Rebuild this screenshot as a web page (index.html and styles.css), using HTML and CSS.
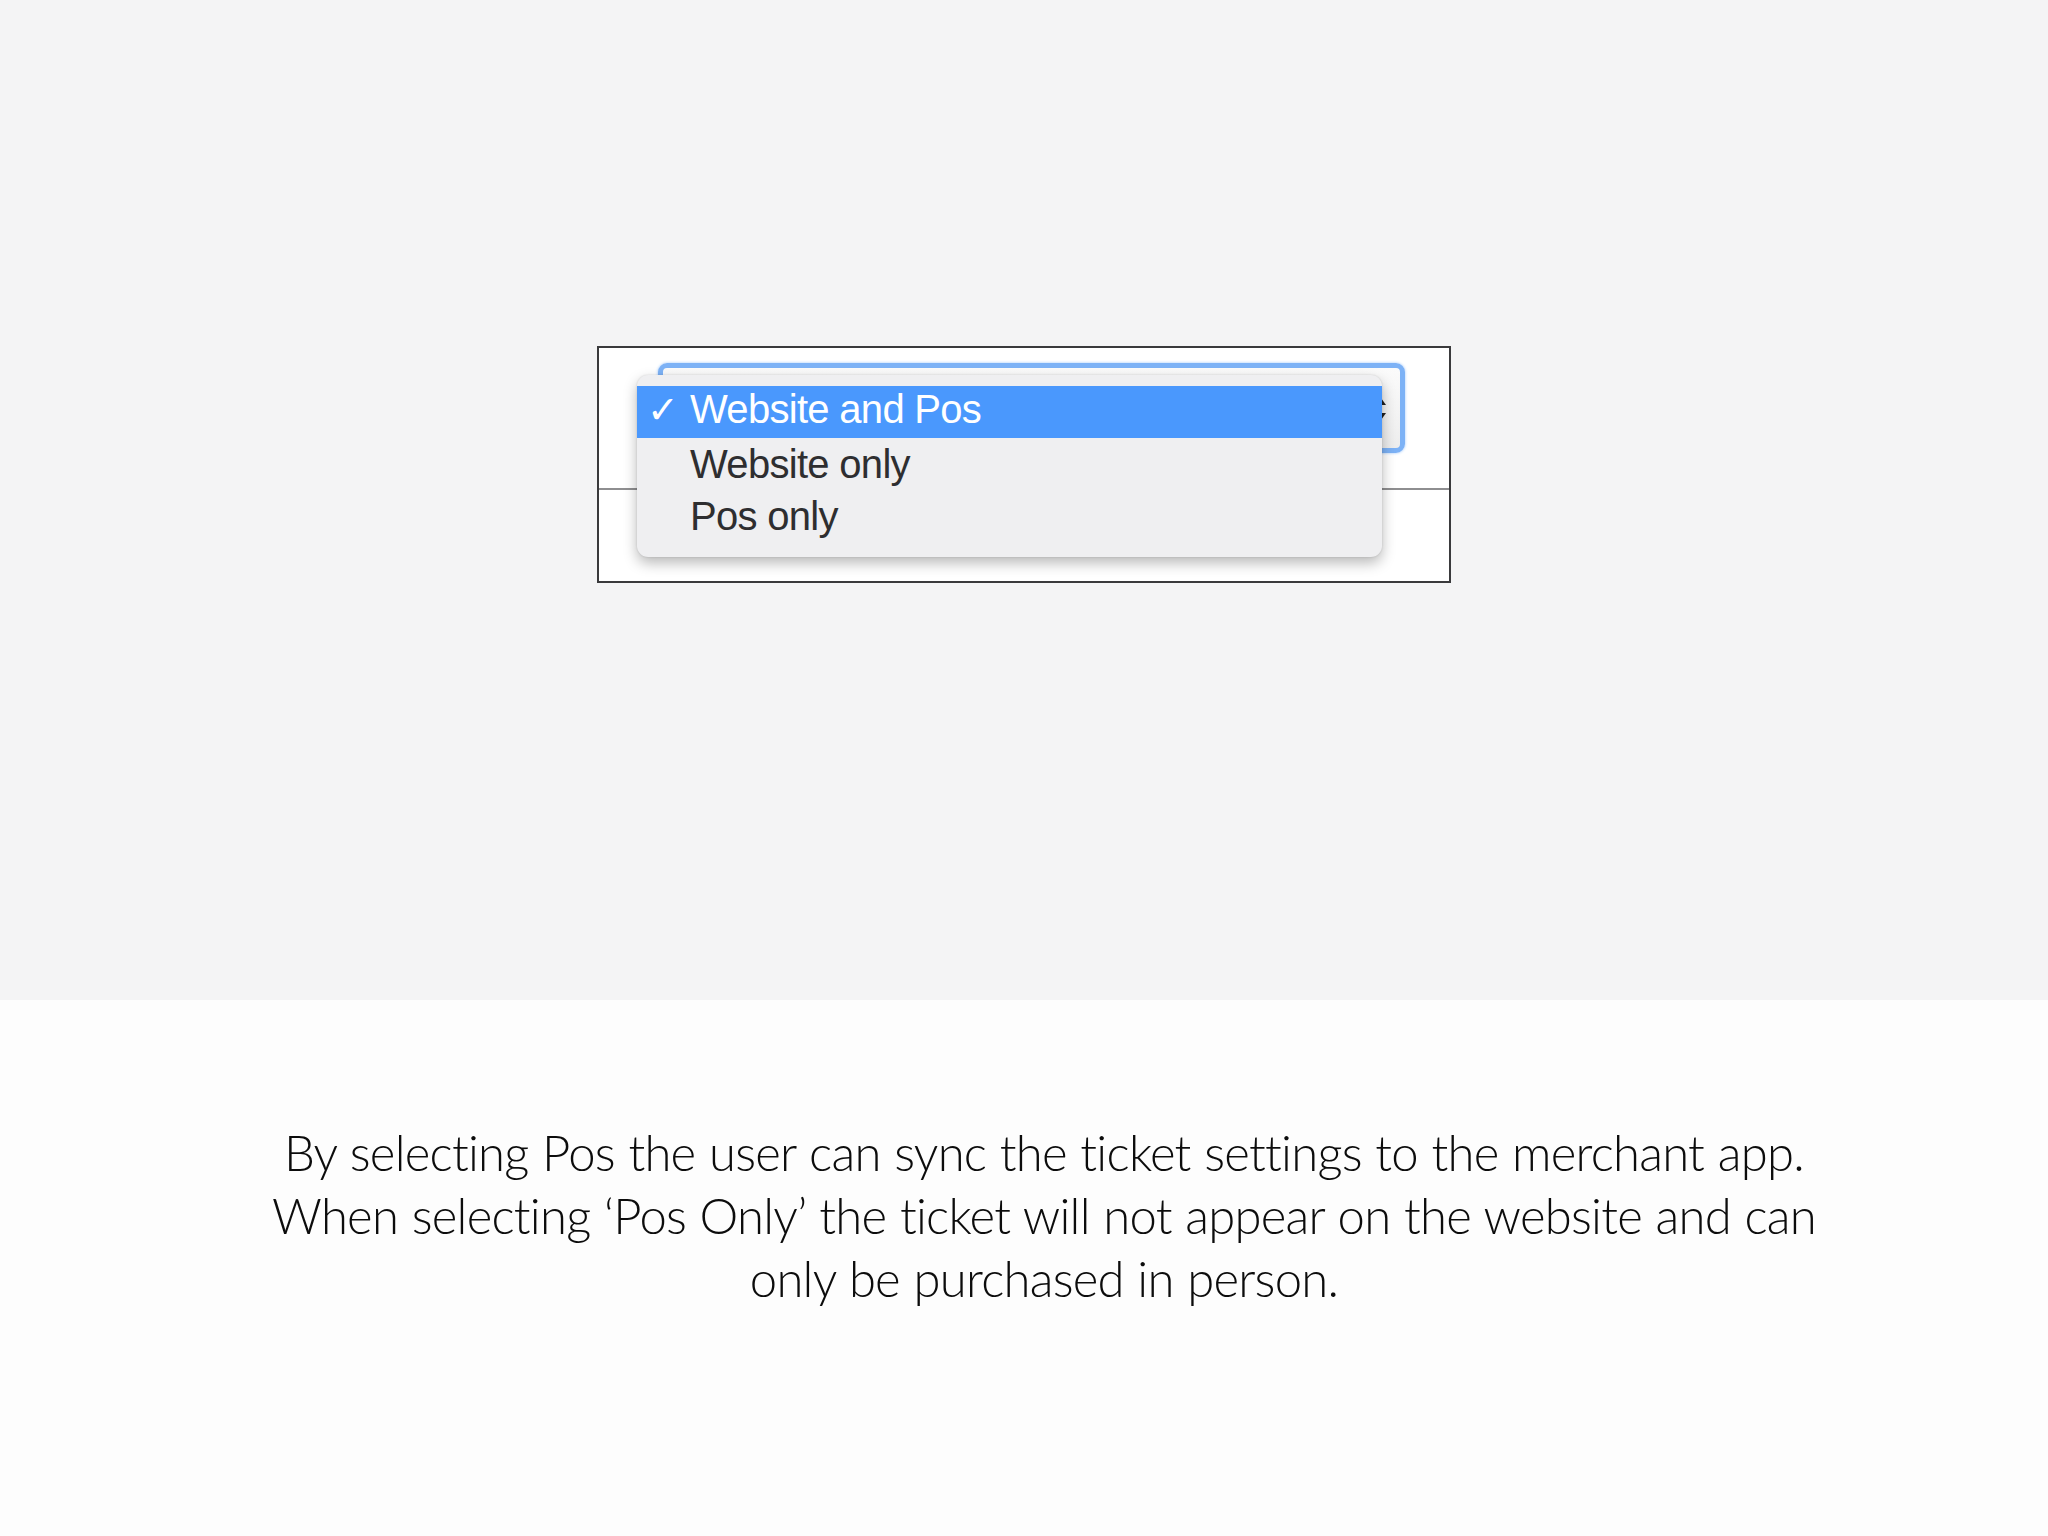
FILE: index.html
```html
<!DOCTYPE html>
<html lang="en">
<head>
  <meta charset="UTF-8">
  <title>Ticket Visibility</title>
  <link rel="stylesheet" href="styles.css">
</head>
<body>
  <div class="stage">
    <div class="frame">
      <div class="select">
        <svg class="select-arrows" width="14" height="30" viewBox="0 0 14 30">
          <path d="M2 11 L7 4 L12 11 Z" fill="#222"/>
          <path d="M2 19 L7 26 L12 19 Z" fill="#222"/>
        </svg>
      </div>
      <div class="rule"></div>

      <!-- open menu of the sales channel select -->
      <ul class="menu">
        <li class="menu-item selected"><span class="check">✓</span>Website and Pos</li>
        <li class="menu-item">Website only</li>
        <li class="menu-item">Pos only</li>
      </ul>
    </div>
  </div>

  <div class="caption">
    <p>
      By selecting Pos the user can sync the ticket settings to the merchant app.<br>
      When selecting ‘Pos Only’ the ticket will not appear on the website and can<br>
      only be purchased in person.
    </p>
  </div>
</body>
</html>
```

FILE: styles.css
```css
body {
  margin: 0;
  background: #fdfdfd;
}

.stage {
  height: 1000px;
  background: #f4f4f5;
  overflow: hidden;
}

.frame {
  position: relative;
  box-sizing: border-box;
  width: 854px;
  height: 237px;
  margin: 346px auto 0;
  padding: 15px 0 0 59px;
  background: #fff;
  border: 2px solid #3a3a3c;
}

.select {
  position: relative;
  box-sizing: border-box;
  width: 747px;
  height: 90px;
  border: 5px solid #7db2f6;
  border-radius: 9px;
  background: linear-gradient(#fbfbfb, #ededed);
  box-shadow: 0 0 3px #9cc6fb;
}

.select-arrows {
  position: absolute;
  right: 12px;
  top: 26px;
}

.rule {
  margin: 35px 0 0 -59px;
  height: 2px;
  background: #8e8e90;
}

.menu {
  position: absolute;
  left: 38px;
  top: 27px;
  width: 745px;
  margin: 0;
  padding: 11px 0 15px;
  list-style: none;
  background: #efeff1;
  border-radius: 11px;
  box-shadow: 0 6px 14px rgba(0, 0, 0, 0.28), 0 0 2px rgba(0, 0, 0, 0.15);
}

.menu-item {
  position: relative;
  height: 52px;
  line-height: 52px;
  padding-left: 53px;
  font-family: "Liberation Sans", Arial, sans-serif;
  font-size: 40px;
  letter-spacing: -0.7px;
  color: #2e2e30;
}

.menu-item.selected {
  line-height: 46px;
  background: #4a98fd;
  color: #fff;
}

.check {
  position: absolute;
  left: 10px;
  top: 1px;
  font-family: "DejaVu Sans", sans-serif;
  font-size: 38px;
  font-weight: bold;
}

.caption {
  padding: 121px 0 0 40px;
  text-align: center;
}

.caption p {
  margin: 0;
  font-family: Lato, "Open Sans", sans-serif;
  font-weight: 300;
  font-size: 49px;
  line-height: 63px;
  letter-spacing: -0.75px;
  word-spacing: 1px;
  font-variant-ligatures: none;
  color: #0c0c0c;
}
```
